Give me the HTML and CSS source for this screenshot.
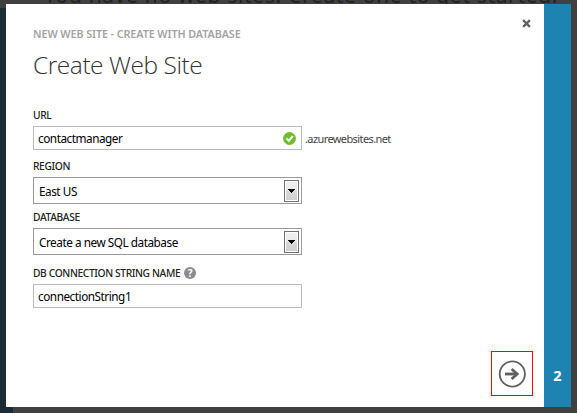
FILE: index.html
```
<!DOCTYPE html>
<html lang="en">
<head>
<meta charset="utf-8">
<title>Create Web Site</title>
<link rel="stylesheet" href="styles.css">
</head>
<body>
<div class="rail"></div>
<p class="backdrop-text"><span>You have no web sites. Create one to get started!</span></p>
<main class="dialog">
  <section class="content">
    <svg class="close" viewBox="0 0 8 8"><path d="M1 1L7 7M7 1L1 7"/></svg>
    <h2><span>NEW WEB SITE - CREATE WITH DATABASE</span></h2>
    <h1><span>Create Web Site</span></h1>
    <form>
      <label><span>URL</span></label>
      <div class="row">
        <div class="input"><span>contactmanager</span>
          <svg class="check" viewBox="0 0 13 13"><circle cx="6.5" cy="6.5" r="6.4"/><path d="M3.4 6.4L5.8 8.8L9.8 4.2"/></svg>
        </div>
        <span class="suffix">.azurewebsites.net</span>
      </div>
      <label class="region"><span>REGION</span></label>
      <div class="select"><span>East US</span><i class="drop"><svg viewBox="0 0 7 4" shape-rendering="crispEdges"><path d="M0 0H7V1H6V2H5V3H4V4H3V3H2V2H1V1H0Z"/></svg></i></div>
      <label class="database"><span>DATABASE</span></label>
      <div class="select"><span>Create a new SQL database</span><i class="drop"><svg viewBox="0 0 7 4" shape-rendering="crispEdges"><path d="M0 0H7V1H6V2H5V3H4V4H3V3H2V2H1V1H0Z"/></svg></i></div>
      <label class="connection"><span>DB CONNECTION STRING NAME</span><b class="help">?</b></label>
      <div class="input"><span>connectionString1</span></div>
    </form>
    <div class="next"><svg viewBox="0 0 28 28"><circle cx="14.3" cy="14" r="12.6"/><path class="shaft" d="M7 14H19"/><path class="head" d="M13.6 9L19.2 14L13.6 19"/></svg></div>
  </section>
  <aside class="step">2</aside>
</main>
</body>
</html>
```
FILE: styles.css
```
* { box-sizing: border-box; margin: 0; padding: 0; }
body {
  width: 577px; height: 413px; overflow: hidden; position: relative;
  background: #404040; color: #000;
  font: 12px/16px "Noto Sans", "Open Sans", sans-serif;
  padding: 4px 6px 6px;
}
span { white-space: nowrap; }
.rail { position: absolute; left: 0; top: 8px; width: 13px; bottom: 0; background: #1c2c35; }
.backdrop-text { position: absolute; left: 44px; top: -19px; font-size: 21px; line-height: 28px; color: #222; letter-spacing: .67px; }
.dialog { position: relative; display: flex; height: 403px; background: #fff; }
.content { position: relative; flex: 1; padding: 22px 27px 0; }
.step { width: 27px; background: #1f83b1; color: #fff; font-size: 14.5px; font-weight: 700; line-height: 20px; text-align: center; padding-top: 361px; }
h2 { font-size: 10.75px; line-height: 16px; font-weight: 600; color: #a3a3a3; letter-spacing: -.07px; }
h1 { font: 300 24.5px/34px "Open Sans", sans-serif; color: #333; margin-top: 6px; letter-spacing: -.45px; }
form { padding-top: 21px; }
label { display: flex; align-items: center; height: 23px; padding-top: 1px; font-size: 10.25px; font-weight: 500; color: #222; letter-spacing: -.38px; }
.region { height: 27px; padding-top: 5px; }
.database { height: 24px; padding-top: 1px; }
.connection { height: 29px; padding-top: 7px; }
.row { display: flex; align-items: center; }
.input, .select { display: flex; align-items: center; justify-content: space-between; width: 269px; border: 1px solid #bababa; background: #fff; font-size: 11.75px; letter-spacing: -.46px; }
.input { height: 24px; padding: 0 5px 0 4px; }
.select { height: 27px; border-color: #999; padding: 0 2px 0 5px; }
.suffix { font-size: 11px; color: #444; padding: 1px 0 0 3px; letter-spacing: -.6px; }
.check { width: 13px; height: 13px; }
.check circle { fill: #6fbd2f; }
.check path { fill: none; stroke: #fff; stroke-width: 2; }
.drop { display: flex; align-items: center; justify-content: center; width: 15px; height: 22px; border: 1px solid #707070; box-shadow: inset 0 0 0 1px #fff; background: linear-gradient(#f2f2f2, #e8e8e8 50%, #d8d8d8 51%, #cfcfcf); }
.drop svg { width: 7px; height: 4px; }
.help { width: 12px; height: 12px; margin-left: 4px; border-radius: 50%; background: #8b8b8b; color: #fff; font-size: 10px; line-height: 12px; text-align: center; letter-spacing: 0; }
.close { position: absolute; left: 516px; top: 15px; width: 9px; height: 9px; stroke: #606060; stroke-width: 2; }
.next { position: absolute; left: 485px; top: 347px; width: 42px; height: 45px; border: 1px solid #f00; display: flex; align-items: center; justify-content: center; }
.next svg { width: 28px; height: 28px; fill: none; stroke: #606060; stroke-width: 1.8; }
.next .shaft, .next .head { stroke-width: 2.8; }
```
